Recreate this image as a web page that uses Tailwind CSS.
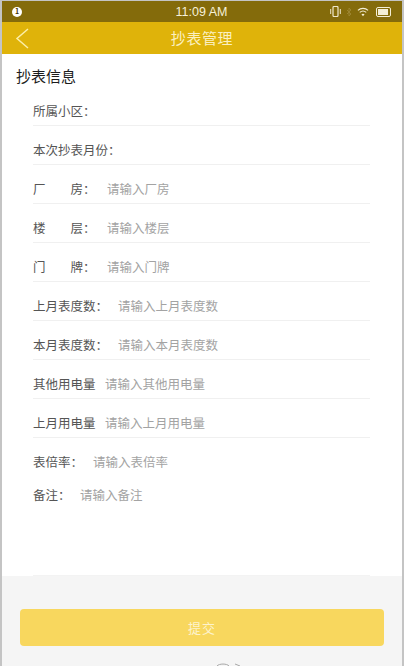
<!DOCTYPE html>
<html lang="en">

<head>
  <meta charset="UTF-8" />
  <meta name="viewport" content="width=device-width, initial-scale=1.0" />
  <script src="https://cdn.jsdelivr.net/npm/@tailwindcss/browser@4"></script>
  <title>抄表管理</title>
</head>

<body class="bg-white font-['Noto_Sans_CJK_SC','Noto_Sans',sans-serif]">
  <div class="w-[404px] h-[666px] overflow-hidden flex flex-col border-x-2 border-t border-[#c4c4c4] bg-white">

    <!-- status bar -->
    <div class="h-[21px] shrink-0 bg-[#846b0b] flex items-center pl-[10px] pr-[11px]">
      <div class="flex-1">
        <div class="w-[10px] h-[10px] rounded-full bg-white flex items-center justify-center text-[7px] leading-none font-bold text-[#3b3000]">1</div>
      </div>
      <div class="pt-px text-[12.5px] font-['Liberation_Sans'] text-[#f6f0d8]">11:09 AM</div>
      <div class="flex-1 flex items-center justify-end gap-[5px]">
        <svg width="11" height="11" viewBox="0 0 11 11" fill="none" stroke="#efe8cc"><rect x="3" y="0.5" width="5" height="10" rx="1" stroke-width="1.2"/><path d="M0.7 3v5M10.3 3v5" stroke-width="1"/></svg>
        <svg width="6" height="10" viewBox="0 0 6 10" fill="none" stroke="#9c8530"><path d="M1 3l4 4-2 2V1l2 2-4 4" stroke-width="1"/></svg>
        <svg class="mr-px" width="12" height="10" viewBox="0 0 13 10" fill="none" stroke="#f3eed6" stroke-width="1.2"><path d="M1 3.2c3-2.8 8-2.8 11 0M3 5.4c2-1.7 5-1.7 7 0"/><path d="M6.5 9.5L4.8 7.4c1-.8 2.4-.8 3.4 0z" fill="#f3eed6" stroke="none"/></svg>
        <div class="ml-[1px] w-[15px] h-[10px] rounded-[2px] border border-[#f3eed6] p-px"><div class="w-[10px] h-full bg-[#f3eed6]"></div></div>
      </div>
    </div>

    <!-- nav -->
    <div class="relative h-[32px] shrink-0 bg-[#dfb30a] flex items-center justify-center">
      <svg class="absolute left-[13px] top-[6px]" width="15" height="21" viewBox="0 0 15 21" fill="none" stroke="#fbeea8" stroke-width="1.5"><path d="M13 1L2 10.5L13 20"/></svg>
      <span class="text-[15px] tracking-[0.6px] text-[#fbf0c0]">抄表管理</span>
    </div>

    <!-- form -->
    <div class="flex-1 pt-[11px]">
      <h2 class="pl-[14px] text-[15px] leading-[22px] text-[#1c1c1c]">抄表信息</h2>
      <div class="pl-[31px] pr-[32px] text-[12.5px] leading-[17px] text-[#555]">
        <div class="h-[39px] flex items-end pb-[6px] border-b border-[#f0f0f0]"><span>所属小区：</span></div>
        <div class="h-[39px] flex items-end pb-[6px] border-b border-[#f0f0f0]"><span>本次抄表月份：</span></div>
        <div class="h-[39px] flex items-end pb-[6px] border-b border-[#f0f0f0]"><span class="w-[74px] whitespace-pre">厂　　房：</span><span class="text-[#a3a3a3]">请输入厂房</span></div>
        <div class="h-[39px] flex items-end pb-[6px] border-b border-[#f0f0f0]"><span class="w-[74px] whitespace-pre">楼　　层：</span><span class="text-[#a3a3a3]">请输入楼层</span></div>
        <div class="h-[39px] flex items-end pb-[6px] border-b border-[#f0f0f0]"><span class="w-[74px] whitespace-pre">门　　牌：</span><span class="text-[#a3a3a3]">请输入门牌</span></div>
        <div class="h-[39px] flex items-end pb-[6px] border-b border-[#f0f0f0]"><span class="w-[85px]">上月表度数：</span><span class="text-[#a3a3a3]">请输入上月表度数</span></div>
        <div class="h-[39px] flex items-end pb-[6px] border-b border-[#f0f0f0]"><span class="w-[85px]">本月表度数：</span><span class="text-[#a3a3a3]">请输入本月表度数</span></div>
        <div class="h-[39px] flex items-end pb-[6px] border-b border-[#f0f0f0]"><span class="w-[72px]">其他用电量</span><span class="text-[#a3a3a3]">请输入其他用电量</span></div>
        <div class="h-[39px] flex items-end pb-[6px] border-b border-[#f0f0f0]"><span class="w-[72px]">上月用电量</span><span class="text-[#a3a3a3]">请输入上月用电量</span></div>
        <div class="h-[39px] flex items-end pb-[7px]"><span class="w-[60px]">表倍率：</span><span class="text-[#a3a3a3]">请输入表倍率</span></div>
        <!-- 备注 runs down to the footer, its line sits just above it -->
        <div class="h-[99px] flex items-start pt-[9px] border-b border-[#f3f3f3]"><span class="w-[47px]">备注：</span><span class="text-[#a3a3a3]">请输入备注</span></div>
      </div>
    </div>

    <!-- footer -->
    <div class="relative h-[90px] shrink-0 -mx-[2px] bg-[#f5f5f5] pt-[33px] px-[20px]">
      <button class="w-full h-[37px] rounded-[4px] bg-[#f8d75e] text-[13px] tracking-[1px] text-[#fdf3cd]">提交</button>
      <svg class="absolute left-[214px] bottom-0" width="30" height="3" viewBox="0 0 30 3" fill="none" stroke="#a8a8a8" stroke-width="1"><path d="M3 3c2-2.6 10-2.6 12 0M21 1l5 2"/></svg>
    </div>
  </div>
</body>

</html>
